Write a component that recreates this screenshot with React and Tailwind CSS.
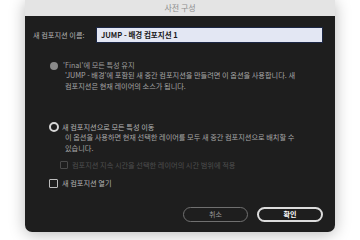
export default function App() {
  const font = { fontFamily: '"Noto Sans CJK KR", "Noto Sans", sans-serif' }

  return (
    <div className="h-[240px] w-[360px] bg-white flex justify-center overflow-hidden" style={font}>
      <div className="w-[310px] h-[232px] flex flex-col rounded-b-[7px] overflow-hidden shadow-[0_2px_16px_rgba(0,0,0,0.28)]">
        <div className="h-4 shrink-0 bg-[#e4e4e4] flex items-center justify-center text-[8px] text-[#8d8d8d]">
          사전 구성
        </div>

        <div className="flex-1 bg-[#1e1e1e] pl-2 pr-3 pt-[11px] text-[7.2px] text-[#b4b4b4]">
          <div className="flex items-center h-4">
            <span className="w-[63px] shrink-0">새 컴포지션 이름:</span>
            <div className="flex-1 h-4 bg-[#e3e7f3] border border-[#1c2744] flex items-center px-1 text-[7.5px] font-bold text-[#1a1a1a]">
              JUMP - 배경 컴포지션 1
            </div>
          </div>

          {/* option 1, disabled */}
          <div className="ml-[17px] mt-[18px]">
            <div className="flex items-center h-[9px] gap-[5px]">
              <span className="w-2 h-2 rounded-full bg-[#8a8a8a] shrink-0"></span>
              <span className="text-[#9d9d9d]">'Final'에 모든 특성 유지</span>
            </div>
            <div className="pl-[15px] leading-[11px] text-[#a6a6a6]">
              <div>'JUMP - 배경'에 포함된 새 중간 컴포지션을 만들려면 이 옵션을 사용합니다. 새</div>
              <div>컴포지션은 현재 레이어의 소스가 됩니다.</div>
            </div>
          </div>

          {/* option 2, selected */}
          <div className="ml-4 mt-[30px]">
            <div className="flex items-center h-[10px] gap-[3px]">
              <span className="w-[10px] h-[10px] rounded-full border-[2px] border-[#d6d6d6] shrink-0"></span>
              <span>새 컴포지션으로 모든 특성 이동</span>
            </div>
            <div className="pl-4 leading-[11px] text-[#a6a6a6]">
              <div>이 옵션을 사용하면 현재 선택한 레이어를 모두 새 중간 컴포지션으로 배치할 수</div>
              <div>있습니다.</div>
            </div>
          </div>

          <div className="ml-[27px] mt-[6px] flex items-center h-[10px] gap-[4px] text-[#4e4e4e]">
            <span className="w-2 h-2 border border-[#4a4a4a] rounded-[1px] shrink-0"></span>
            <span>컴포지션 지속 시간을 선택한 레이어의 시간 범위에 적용</span>
          </div>

          <div className="ml-4 mt-2 flex items-center h-[10px] gap-[4px]">
            <span className="w-[9px] h-[9px] border-[1.5px] border-[#bdbdbd] rounded-[1px] shrink-0"></span>
            <span>새 컴포지션 열기</span>
          </div>

          <div className="mt-[19px] flex justify-end gap-[9px]">
            <button className="w-[65px] h-[15px] rounded-full border-[1.5px] border-[#707070] text-[7px] text-[#9a9a9a] flex items-center justify-center">
              취소
            </button>
            <button className="w-[66px] h-[15px] rounded-full border-2 border-[#dcdcdc] text-[7px] font-bold text-white flex items-center justify-center">
              확인
            </button>
          </div>
        </div>
      </div>
    </div>
  )
}
